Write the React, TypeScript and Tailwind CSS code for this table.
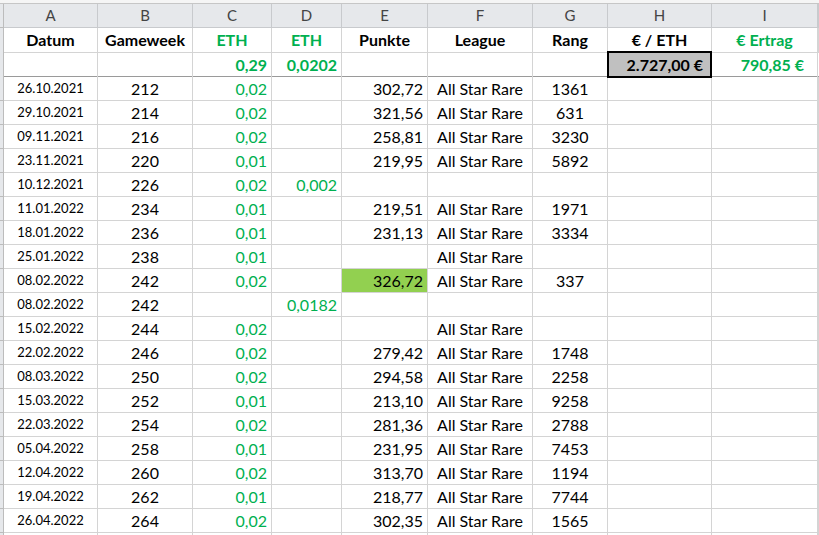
import React from "react";

type Row = {
    date: string;
    gw: string;
    eth: string;
    eth2: string;
    pts: string;
    league: string;
    rank: string;
    hi?: boolean;
};

const ASR = "All Star Rare";

const rows: Row[] = [
    { date: "26.10.2021", gw: "212", eth: "0,02", eth2: "", pts: "302,72", league: ASR, rank: "1361" },
    { date: "29.10.2021", gw: "214", eth: "0,02", eth2: "", pts: "321,56", league: ASR, rank: "631" },
    { date: "09.11.2021", gw: "216", eth: "0,02", eth2: "", pts: "258,81", league: ASR, rank: "3230" },
    { date: "23.11.2021", gw: "220", eth: "0,01", eth2: "", pts: "219,95", league: ASR, rank: "5892" },
    { date: "10.12.2021", gw: "226", eth: "0,02", eth2: "0,002", pts: "", league: "", rank: "" },
    { date: "11.01.2022", gw: "234", eth: "0,01", eth2: "", pts: "219,51", league: ASR, rank: "1971" },
    { date: "18.01.2022", gw: "236", eth: "0,01", eth2: "", pts: "231,13", league: ASR, rank: "3334" },
    { date: "25.01.2022", gw: "238", eth: "0,01", eth2: "", pts: "", league: ASR, rank: "" },
    { date: "08.02.2022", gw: "242", eth: "0,02", eth2: "", pts: "326,72", league: ASR, rank: "337", hi: true },
    { date: "08.02.2022", gw: "242", eth: "", eth2: "0,0182", pts: "", league: "", rank: "" },
    { date: "15.02.2022", gw: "244", eth: "0,02", eth2: "", pts: "", league: ASR, rank: "" },
    { date: "22.02.2022", gw: "246", eth: "0,02", eth2: "", pts: "279,42", league: ASR, rank: "1748" },
    { date: "08.03.2022", gw: "250", eth: "0,02", eth2: "", pts: "294,58", league: ASR, rank: "2258" },
    { date: "15.03.2022", gw: "252", eth: "0,01", eth2: "", pts: "213,10", league: ASR, rank: "9258" },
    { date: "22.03.2022", gw: "254", eth: "0,02", eth2: "", pts: "281,36", league: ASR, rank: "2788" },
    { date: "05.04.2022", gw: "258", eth: "0,01", eth2: "", pts: "231,95", league: ASR, rank: "7453" },
    { date: "12.04.2022", gw: "260", eth: "0,02", eth2: "", pts: "313,70", league: ASR, rank: "1194" },
    { date: "19.04.2022", gw: "262", eth: "0,01", eth2: "", pts: "218,77", league: ASR, rank: "7744" },
    { date: "26.04.2022", gw: "264", eth: "0,02", eth2: "", pts: "302,35", league: ASR, rank: "1565" },
];

const cols = "grid grid-cols-[4px_94px_95px_79px_70px_86px_105px_75px_104px_106px_1fr]";
const cell = "border-r border-b border-[#d4d4d4] flex items-center overflow-hidden whitespace-nowrap";
const green = "text-[#00b050]";

export default function App() {
    return (
        <div className="w-[819px] h-[535px] overflow-hidden bg-white text-black text-[16px] font-['Lato','Liberation_Sans',sans-serif]">
            {/* column letters */}
            <div className="h-[3px] bg-[#f5f5f5]" />
            <div className={`${cols} h-[25px] bg-[#e6e8eb] border-t border-[#c6c6c6] text-[#444] text-[15px]`}>
                <div className="border-r border-b border-[#bcbcbc]" />
                {["A", "B", "C", "D", "E", "F", "G", "H", "I", ""].map((l, i) => (
                    <div key={i} className="border-r border-b border-[#c8cacd] flex items-center justify-center">
                        {l}
                    </div>
                ))}
            </div>

            {/* header row */}
            <div className={`${cols} h-[25px] font-bold`}>
                <div className="border-r border-[#bcbcbc] bg-[#e6e8eb]" />
                <div className={`${cell} justify-center`}>Datum</div>
                <div className={`${cell} justify-center`}>Gameweek</div>
                <div className={`${cell} justify-center ${green}`}>ETH</div>
                <div className={`${cell} justify-center ${green}`}>ETH</div>
                <div className={`${cell} justify-center`}>Punkte</div>
                <div className={`${cell} justify-center`}>League</div>
                <div className={`${cell} justify-center`}>Rang</div>
                <div className={`${cell} justify-center`}>€ / ETH</div>
                <div className={`${cell} justify-center ${green}`}>€ Ertrag</div>
                <div className={cell} />
            </div>

            {/* totals row */}
            <div className={`${cols} h-[24px] font-bold border-b border-[#9a9a9a]`}>
                <div className="border-r border-[#bcbcbc] bg-[#e6e8eb]" />
                <div className="border-r border-[#d4d4d4]" />
                <div className="border-r border-[#d4d4d4]" />
                <div className={`border-r border-[#d4d4d4] flex items-center justify-end pr-[4px] ${green}`}>0,29</div>
                <div className={`border-r border-[#d4d4d4] flex items-center justify-end pr-[4px] ${green}`}>0,0202</div>
                <div className="border-r border-[#d4d4d4]" />
                <div className="border-r border-[#d4d4d4]" />
                <div className="border-r border-[#d4d4d4]" />
                <div className="relative">
                    <div className="absolute -left-[1px] -top-[2px] right-0 -bottom-[1px] bg-[#c0c0c0] border-2 border-black flex items-center justify-end pr-[7px]">
                        2.727,00 €
                    </div>
                </div>
                <div className={`border-r border-[#d4d4d4] flex items-center justify-end pr-[13px] ${green}`}>790,85 €</div>
                <div />
            </div>

            {/* data rows */}
            {rows.map((r, i) => (
                <div key={i} className={`${cols} h-[24px]`}>
                    <div className="border-r border-b border-[#bcbcbc] bg-[#e6e8eb]" />
                    <div className={`${cell} justify-center text-[13px]`}>{r.date}</div>
                    <div className={`${cell} justify-center`}>{r.gw}</div>
                    <div className={`${cell} justify-end pr-[4px] ${green}`}>{r.eth}</div>
                    <div className={`${cell} justify-end pr-[4px] ${green}`}>{r.eth2}</div>
                    <div className={`${cell} justify-end pr-[4px] ${r.hi ? "bg-[#92d050]" : ""}`}>{r.pts}</div>
                    <div className={`${cell} justify-center`}>{r.league}</div>
                    <div className={`${cell} justify-center`}>{r.rank}</div>
                    <div className={cell} />
                    <div className={cell} />
                    <div className={cell} />
                </div>
            ))}
            <div className={`${cols} h-[24px]`}>
                <div className="border-r border-[#bcbcbc] bg-[#e6e8eb]" />
                {Array.from({ length: 10 }).map((_, i) => (
                    <div key={i} className="border-r border-[#d4d4d4]" />
                ))}
            </div>
        </div>
    );
}
